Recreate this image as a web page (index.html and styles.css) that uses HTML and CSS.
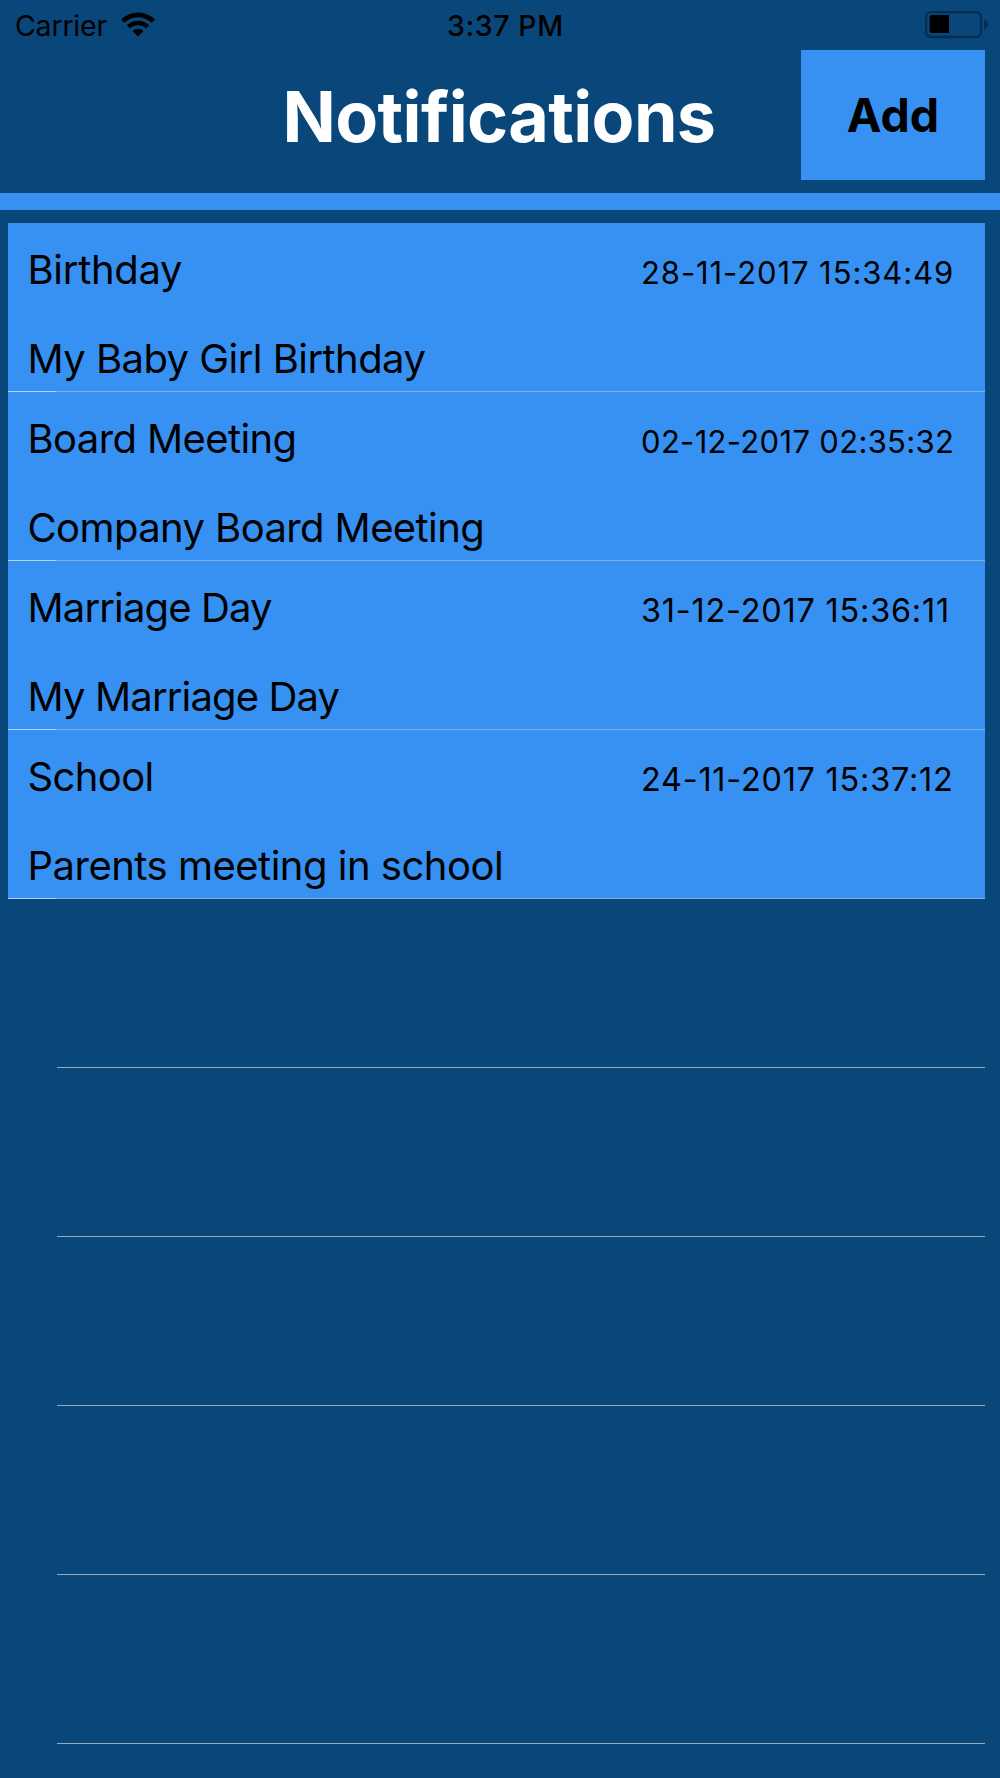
FILE: index.html
```html
<!DOCTYPE html>
<html lang="en">
  <head>
    <meta charset="utf-8">
    <title>Notifications</title>
    <link rel="stylesheet" href="styles.css">
  </head>
  <body>
    <div class="status-bar">
      <div class="carrier">
        <span>Carrier</span>
        <svg class="wifi" width="34" height="25" viewBox="0 0 34 25">
          <path d="M0 7.6 A24.2 24.2 0 0 1 34 7.6 L30.7 10.8 A19.5 19.5 0 0 0 3.3 10.8 Z"/>
          <path d="M5.7 13.3 A16 16 0 0 1 28.3 13.3 L25 16.6 A11.4 11.4 0 0 0 9 16.6 Z"/>
          <path d="M11.6 18.9 A7.8 7.8 0 0 1 22.4 18.9 L17 24.5 Z"/>
        </svg>
      </div>
      <div class="time">3:37 PM</div>
      <svg class="battery" width="64" height="28" viewBox="0 0 64 28">
        <rect class="battery-body" x="1" y="1" width="55" height="25" rx="5"/>
        <path class="battery-cap" d="M59 8.5 Q63 10.5 63 13.5 Q63 16.5 59 18.5 Z"/>
        <path d="M7 4 H24 V22 H7 Q4.500 22 4.500 19.500 V6.500 Q4.500 4 7 4 Z"/>
      </svg>
    </div>

    <div class="header">
      <h1>Notifications</h1>
      <button type="button">Add</button>
    </div>
    <div class="divider"></div>

    <ul class="list">
      <li class="item birthday">
        <div class="top">
          <span class="name">Birthday</span>
          <span class="date">28-11-2017 15:34:49</span>
        </div>
        <div class="message">My Baby Girl Birthday</div>
      </li>
      <li class="item board">
        <div class="top">
          <span class="name">Board Meeting</span>
          <span class="date">02-12-2017 02:35:32</span>
        </div>
        <div class="message">Company Board Meeting</div>
      </li>
      <li class="item marriage">
        <div class="top">
          <span class="name">Marriage Day</span>
          <span class="date">31-12-2017 15:36:11</span>
        </div>
        <div class="message">My Marriage Day</div>
      </li>
      <li class="item school">
        <div class="top">
          <span class="name">School</span>
          <span class="date">24-11-2017 15:37:12</span>
        </div>
        <div class="message">Parents meeting in school</div>
      </li>
      <li class="empty"></li>
      <li class="empty"></li>
      <li class="empty"></li>
      <li class="empty"></li>
      <li class="empty"></li>
    </ul>
  </body>
</html>
```

FILE: styles.css
```css
* {
  box-sizing: border-box;
}

body {
  font-family: Inter, "Liberation Sans", sans-serif;
  margin: 0;
  height: 1778px;
  overflow: hidden;
  background-color: #09477b;
  color: #000;
}

.status-bar {
  display: grid;
  grid-template-columns: 1fr auto 1fr;
  height: 50px;
  padding: 0 11px 0 15px;
  font-size: 28.5px;
  line-height: 52px;
}

.carrier {
  display: flex;
  gap: 14px;
  letter-spacing: -0.2px;
}

.wifi {
  margin-top: 12px;
}

.time {
  font-weight: 550;
  letter-spacing: 0.6px;
  padding-left: 7px;
}

.battery {
  justify-self: end;
  margin-top: 11px;
}

.battery-body {
  fill: none;
  stroke: #062e50;
  stroke-width: 2.4;
}

.battery-cap {
  fill: #062e50;
}

.header {
  display: grid;
  grid-template-columns: 184px 1fr 184px;
  height: 143px;
  padding: 0 15px;
}

h1 {
  grid-column: 2;
  margin: 0;
  padding-right: 2px;
  color: #fff;
  font-size: 70px;
  font-weight: 700;
  letter-spacing: -0.64px;
  line-height: 134px;
  text-align: center;
}

button {
  height: 130px;
  padding: 0 0 1px;
  border: none;
  background-color: #3691f3;
  color: #000;
  font-family: inherit;
  font-size: 46.5px;
  font-weight: 700;
  cursor: pointer;
}

.divider {
  height: 17px;
  background-color: #3691f3;
}

.list {
  list-style: none;
  margin: 12.5px 15px 0 8px;
  padding: 0;
}

.item {
  height: 169.1px;
  padding: 24.7px 0 0 19.5px;
  background-color: #3691f3;
  font-size: 40px;
  line-height: 46px;
}

/* separator is lighter under the left inset */
.item::after {
  content: "";
  display: block;
  height: 1px;
  margin: 8.4px 0 0 -19.5px;
  background: linear-gradient(to right, #b4d5f8 48px, #86aedb 48px);
}

.top {
  display: flex;
  align-items: baseline;
  height: 89px;
}

.date {
  margin-left: auto;
  width: 344px;
  white-space: nowrap;
  font-size: 31px;
}

.birthday {
  letter-spacing: -0.55px;
}

.birthday .name {
  letter-spacing: -0.3px;
}

.birthday .date {
  letter-spacing: 0.91px;
}

.board {
  letter-spacing: -0.6px;
}

.board .date {
  letter-spacing: 0.32px;
}

.marriage {
  letter-spacing: -0.85px;
}

.marriage .date {
  font-size: 32.4px;
  letter-spacing: 0.81px;
}

.school {
  letter-spacing: -0.5px;
}

.school .name {
  letter-spacing: -0.63px;
}

.school .date {
  font-size: 32.4px;
  letter-spacing: 0.78px;
}

.empty {
  height: 169.1px;
  margin-left: 48.5px;
  border-bottom: 1px solid #9fa9b5;
}
```
